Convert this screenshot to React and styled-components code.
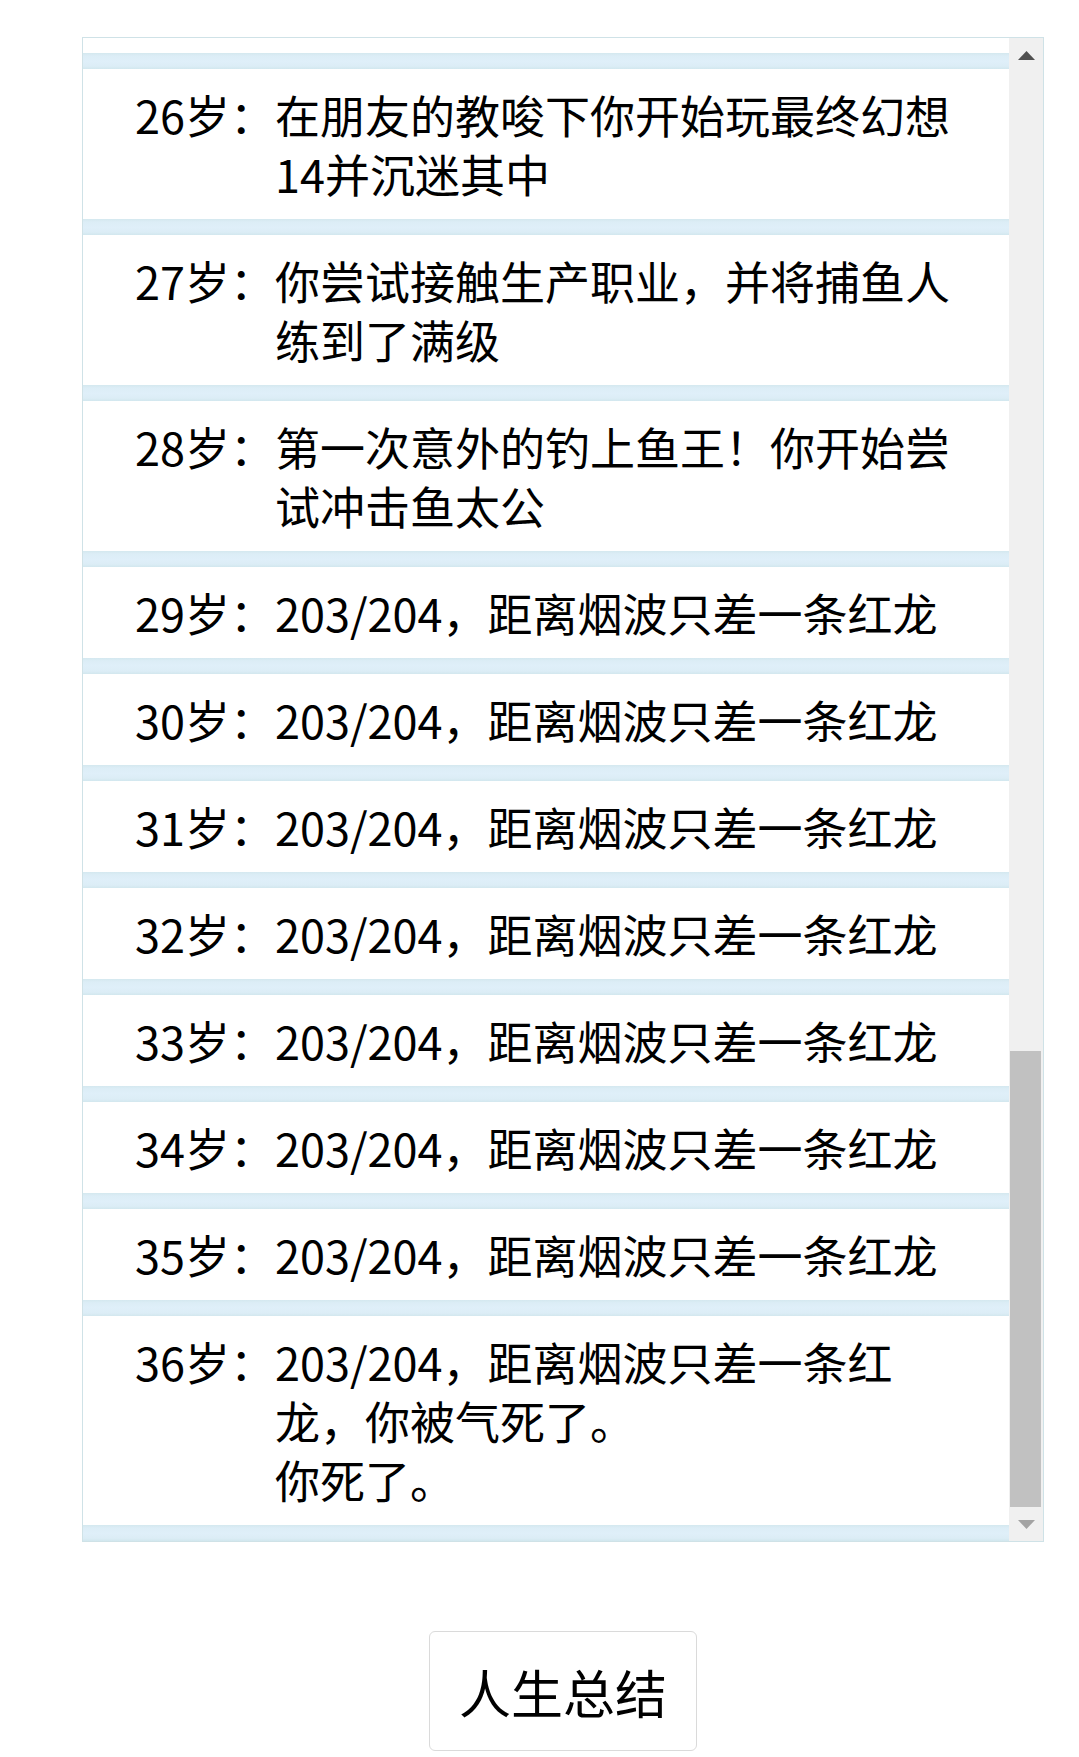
import React from 'react'
import styled, { createGlobalStyle } from 'styled-components'

const GlobalStyle = createGlobalStyle`
  html, body {
    margin: 0;
    padding: 0;
    background: #fff;
  }
  body {
    font-family: "Noto Sans CJK SC", "Noto Sans", sans-serif;
    color: #000;
  }
`

const Page = styled.div`
  padding: 37px 35px 6px 82px;
  display: flex;
  flex-direction: column;
  align-items: center;
`

const Panel = styled.div`
  width: 100%;
  height: 1505px;
  box-sizing: border-box;
  border: 1px solid #cfe2e7;
  display: flex;
  background: #fff;
`

const List = styled.ul`
  flex: 1;
  margin: 0;
  padding: 0;
  list-style: none;
  overflow: hidden;
  display: flex;
  flex-direction: column;
  justify-content: flex-end;
`

const Divider = styled.li`
  flex: none;
  height: 16px;
  background: linear-gradient(
    to bottom,
    #d4e8ef 0%,
    #dcedf6 18%,
    #dfeff9 50%,
    #dcedf6 82%,
    #d2e7ee 100%
  );
`

const Item = styled.li`
  flex: none;
  display: flex;
  padding: 16px 42px 16px 52px;
  font-size: 45px;
  line-height: 59px;
  background: #fff;
`

const Age = styled.span`
  flex: none;
  white-space: nowrap;
`

const Event = styled.span`
  flex: 1;
  min-width: 0;
  white-space: pre-line;
`

const Scrollbar = styled.div`
  flex: none;
  width: 34px;
  display: flex;
  flex-direction: column;
  background: #f0f0f0;
`

const ArrowBtn = styled.div`
  flex: none;
  height: 34px;
  display: flex;
  align-items: center;
  justify-content: center;
`

const Track = styled.div`
  flex: 1;
  display: flex;
  flex-direction: column;
  justify-content: flex-end;
  padding: 0 2px 0 1px;
`

const Thumb = styled.div`
  height: 456px;
  background: #c1c1c1;
`

const SummaryButton = styled.button`
  margin-top: 89px;
  height: 120px;
  padding: 0 29px;
  border: 1px solid #dadada;
  border-radius: 6px;
  background: #fff;
  font-family: "Noto Sans CJK SC", "Noto Sans", sans-serif;
  font-size: 52px;
  color: #000;
  cursor: pointer;
`

const Arrow = ({ up, color }) => (
  <svg width="17" height="9" viewBox="0 0 17 9">
    <polygon points={up ? '0,9 8.5,0 17,9' : '0,0 17,0 8.5,9'} fill={color} />
  </svg>
)

const events = [
  { age: 26, text: '在朋友的教唆下你开始玩最终幻想14并沉迷其中' },
  { age: 27, text: '你尝试接触生产职业，并将捕鱼人练到了满级' },
  { age: 28, text: '第一次意外的钓上鱼王！你开始尝试冲击鱼太公' },
  { age: 29, text: '203/204，距离烟波只差一条红龙' },
  { age: 30, text: '203/204，距离烟波只差一条红龙' },
  { age: 31, text: '203/204，距离烟波只差一条红龙' },
  { age: 32, text: '203/204，距离烟波只差一条红龙' },
  { age: 33, text: '203/204，距离烟波只差一条红龙' },
  { age: 34, text: '203/204，距离烟波只差一条红龙' },
  { age: 35, text: '203/204，距离烟波只差一条红龙' },
  { age: 36, text: '203/204，距离烟波只差一条红龙，你被气死了。\n你死了。' },
]

export default function App() {
  return (
    <>
      <GlobalStyle />
      <Page>
        <Panel>
          <List>
            {events.map(item => (
              <React.Fragment key={item.age}>
                <Divider />
                <Item>
                  <Age>{item.age}岁：</Age>
                  <Event>{item.text}</Event>
                </Item>
              </React.Fragment>
            ))}
            <Divider />
          </List>
          <Scrollbar>
            <ArrowBtn>
              <Arrow up color="#505050" />
            </ArrowBtn>
            <Track>
              <Thumb />
            </Track>
            <ArrowBtn>
              <Arrow color="#a3a3a3" />
            </ArrowBtn>
          </Scrollbar>
        </Panel>
        <SummaryButton>人生总结</SummaryButton>
      </Page>
    </>
  )
}
